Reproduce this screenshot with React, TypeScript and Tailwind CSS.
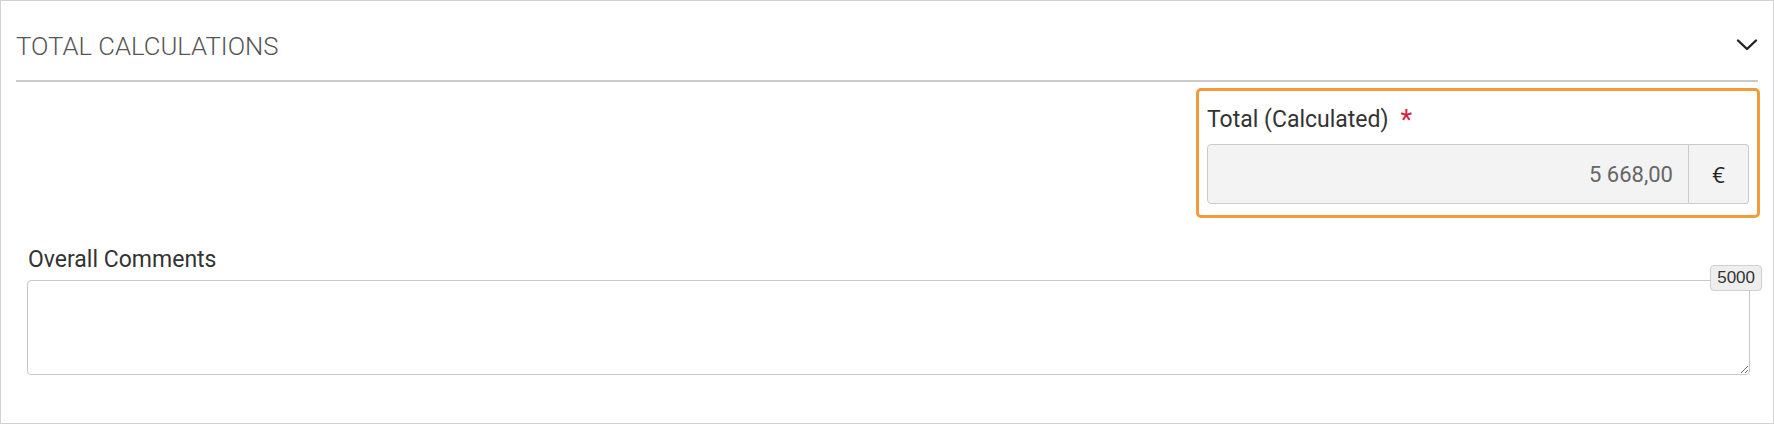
export default function App() {
  return (
    <div className="w-[1774px] h-[424px] bg-white border border-[#d2d2d2] font-['Roboto','Liberation_Sans',sans-serif] text-[#333]">
      <div className="mx-[15px] flex flex-col">
        {/* Section header */}
        <div className="h-[81px] pt-[13px] flex items-center justify-between border-b-2 border-[#cacaca]">
          <h2 className="text-[25.7px] font-light text-[#555] leading-none">TOTAL CALCULATIONS</h2>
          <svg width="22" height="14" viewBox="0 0 22 14" className="mt-[-5px]">
            <path d="M2 2.5 L11 11 L20 2.5" fill="none" stroke="#222" strokeWidth="2.4" strokeLinecap="round" strokeLinejoin="round" />
          </svg>
        </div>

        {/* Highlighted total field */}
        <div className="flex justify-end mt-[6px]">
          <div className="w-[564px] mr-[-2px] border-[3px] border-[#f39a3b] rounded-[5px] px-[8px] pt-[15px] pb-[11px]">
            <label className="flex items-start text-[23px] leading-[27px] text-[#333] mb-[10px]">
              Total (Calculated)
              <span className="ml-[12px] mt-[1px] text-[#d0223a] text-[27px] leading-[27px]">*</span>
            </label>
            <div className="flex h-[60px]">
              <div className="flex-1 flex items-center justify-end pr-[15px] bg-[#f3f3f3] border border-[#cbcbcb] rounded-l-[4px] text-[22px] text-[#666]">
                5 668,00
              </div>
              <div className="w-[60px] flex items-center justify-center bg-[#f3f3f3] border border-l-0 border-[#cbcbcb] rounded-r-[4px] text-[22px] text-[#222] font-['Open_Sans',sans-serif]">
                €
              </div>
            </div>
          </div>
        </div>

        {/* Comments */}
        <div className="pl-[11px] pr-[8px] mt-[28px]">
          <label className="block text-[23px] leading-[27px] text-[#333] mb-[7px] pl-[1px]">Overall Comments</label>
          <div className="relative">
            <textarea className="block w-full h-[95px] border border-[#c8c8c8] rounded-[4px] bg-white outline-none" />
            <span className="absolute top-[-15px] right-[-12px] h-[26px] px-[6px] flex items-center bg-[#eeeeee] border border-[#cfcfcf] rounded-[4px] text-[17px] text-[#333] font-['Liberation_Sans',Arial,sans-serif]">
              5000
            </span>
          </div>
        </div>
      </div>
    </div>
  );
}
